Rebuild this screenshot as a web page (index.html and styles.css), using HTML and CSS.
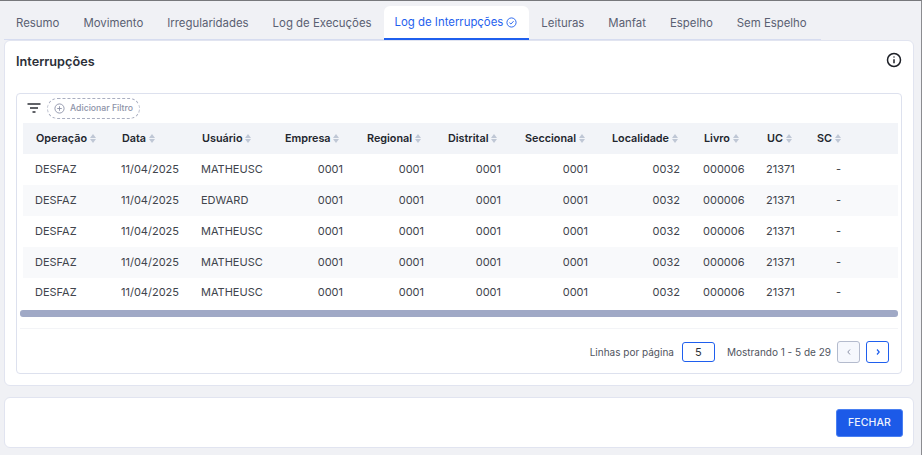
FILE: index.html
```html
<!DOCTYPE html>
<html lang="pt-BR">
<head>
    <meta charset="UTF-8">
    <meta name="viewport" content="width=device-width, initial-scale=1.0">
    <title>Interrupções</title>
    <link rel="stylesheet" href="styles.css">
</head>
<body>
    <div class="page">
        <div class="tabs">
            <a class="tab">Resumo</a>
            <a class="tab">Movimento</a>
            <a class="tab">Irregularidades</a>
            <a class="tab">Log de Execuções</a>
            <a class="tab active">Log de Interrupções
                <svg class="tab-check" width="11" height="11" viewBox="0 0 12 12" fill="none" stroke="#1f5fee" stroke-width="1"><circle cx="6" cy="6" r="5"/><path d="M3.8 6.2l1.6 1.5 2.9-3.2"/></svg>
            </a>
            <a class="tab">Leituras</a>
            <a class="tab">Manfat</a>
            <a class="tab">Espelho</a>
            <a class="tab">Sem Espelho</a>
        </div>

        <div class="card main-card">
            <div class="card-head">
                <h2>Interrupções</h2>
                <svg width="16" height="16" viewBox="0 0 16 16" fill="none" stroke="#1c1f26" stroke-width="1.5"><circle cx="8" cy="8" r="6.5"/><path d="M8 7.2v4"/><path d="M8 4.4v1.2"/></svg>
            </div>

            <div class="table-box">
                <div class="filter-row">
                    <svg width="14" height="12" viewBox="0 0 14 12" fill="none" stroke="#1c1f26" stroke-width="1.4"><path d="M0.5 2h13"/><path d="M3 6h8"/><path d="M5.5 10h3"/></svg>
                    <button class="add-filter">
                        <svg width="11" height="11" viewBox="0 0 12 12" fill="none" stroke="#8d93a8" stroke-width="1"><circle cx="6" cy="6" r="5"/><path d="M6 3.5v5"/><path d="M3.5 6h5"/></svg>
                        Adicionar Filtro
                    </button>
                </div>

                <table class="grid">
                    <thead>
                        <tr>
                            <th class="c-op">Operação <span class="sort"></span></th>
                            <th class="c-data">Data <span class="sort"></span></th>
                            <th class="c-user">Usuário <span class="sort"></span></th>
                            <th class="c-emp">Empresa <span class="sort"></span></th>
                            <th class="c-reg">Regional <span class="sort"></span></th>
                            <th class="c-dis">Distrital <span class="sort"></span></th>
                            <th class="c-sec">Seccional <span class="sort"></span></th>
                            <th class="c-loc">Localidade <span class="sort"></span></th>
                            <th class="c-liv">Livro <span class="sort"></span></th>
                            <th class="c-uc">UC <span class="sort"></span></th>
                            <th class="c-sc">SC <span class="sort"></span></th>
                        </tr>
                    </thead>
                    <tbody>
                        <tr>
                            <td>DESFAZ</td><td>11/04/2025</td><td>MATHEUSC</td>
                            <td class="num">0001</td><td class="num">0001</td><td class="num">0001</td><td class="num">0001</td><td class="num">0032</td>
                            <td>000006</td><td>21371</td><td class="dash">-</td>
                        </tr>
                        <tr class="odd">
                            <td>DESFAZ</td><td>11/04/2025</td><td>EDWARD</td>
                            <td class="num">0001</td><td class="num">0001</td><td class="num">0001</td><td class="num">0001</td><td class="num">0032</td>
                            <td>000006</td><td>21371</td><td class="dash">-</td>
                        </tr>
                        <tr>
                            <td>DESFAZ</td><td>11/04/2025</td><td>MATHEUSC</td>
                            <td class="num">0001</td><td class="num">0001</td><td class="num">0001</td><td class="num">0001</td><td class="num">0032</td>
                            <td>000006</td><td>21371</td><td class="dash">-</td>
                        </tr>
                        <tr class="odd">
                            <td>DESFAZ</td><td>11/04/2025</td><td>MATHEUSC</td>
                            <td class="num">0001</td><td class="num">0001</td><td class="num">0001</td><td class="num">0001</td><td class="num">0032</td>
                            <td>000006</td><td>21371</td><td class="dash">-</td>
                        </tr>
                        <tr>
                            <td>DESFAZ</td><td>11/04/2025</td><td>MATHEUSC</td>
                            <td class="num">0001</td><td class="num">0001</td><td class="num">0001</td><td class="num">0001</td><td class="num">0032</td>
                            <td>000006</td><td>21371</td><td class="dash">-</td>
                        </tr>
                    </tbody>
                </table>

                <div class="scrollbar"></div>

                <div class="pager">
                    <span>Linhas por página</span>
                    <div class="page-size">5</div>
                    <span class="showing">Mostrando 1 - 5 de 29</span>
                    <button class="page-btn prev">
                        <svg width="6" height="8" viewBox="0 0 6 8" fill="none" stroke="#8d93a8" stroke-width="1"><path d="M4 1.5L1.8 4 4 6.5"/></svg>
                    </button>
                    <button class="page-btn next">
                        <svg width="6" height="8" viewBox="0 0 6 8" fill="none" stroke="#1f5fee" stroke-width="1.2"><path d="M2 1.5L4.2 4 2 6.5"/></svg>
                    </button>
                </div>
            </div>
        </div>

        <div class="card footer-card">
            <button class="close-btn">FECHAR</button>
        </div>
    </div>
</body>
</html>
```

FILE: styles.css
```css
html, body {
    margin: 0;
    height: 100%;
}
body {
    background-color: #f0f1f5;
    font-family: "Inter", "Liberation Sans", sans-serif;
    color: #3d4149;
    overflow: hidden;
}
.page {
    height: 455px;
    box-sizing: border-box;
    border-top: 1px solid #77787c;
    border-right: 1px solid #8b8c90;
    padding: 5px 7px 0 4px;
}

/* tabs */
.tabs {
    display: flex;
    width: 817px;
    height: 33px;
    border-bottom: 1px solid #d6dcf0;
}
.tab {
    display: flex;
    align-items: center;
    gap: 3px;
    padding: 0 12px;
    font-size: 11.4px;
    color: #5a6072;
    white-space: nowrap;
}
.tab.active {
    background-color: #fff;
    color: #1f5fee;
    border-bottom: 2px solid #1f5fee;
    border-radius: 6px 6px 0 0;
    height: 32px;
    padding: 0 12px 0 11px;
    position: relative;
}
.tab-check {
    flex: none;
}

/* cards */
.card {
    background-color: #fff;
    border: 1px solid #e1e4f0;
    border-radius: 6px;
    box-sizing: border-box;
}
.main-card {
    height: 346px;
    padding: 0 11px;
}
.card-head {
    display: flex;
    justify-content: space-between;
    height: 52px;
    padding-top: 11px;
    box-sizing: border-box;
}
.card-head h2 {
    margin: 1px 0 0;
    font-size: 12.7px;
    font-weight: 600;
    line-height: 18px;
    color: #2b2f38;
}
.table-box {
    height: 281px;
    box-sizing: border-box;
    border: 1px solid #dde1ee;
    border-radius: 4px;
    padding: 0 3px;
}
.filter-row {
    display: flex;
    align-items: center;
    gap: 6px;
    height: 28px;
    padding-left: 7px;
}
.add-filter {
    display: flex;
    align-items: center;
    gap: 5px;
    height: 21px;
    padding: 0 6px;
    background: none;
    border: 1px dashed #a9aec0;
    border-radius: 11px;
    font-family: inherit;
    font-size: 8.7px;
    font-weight: 500;
    color: #8d93a8;
}

/* table */
.grid {
    border-collapse: collapse;
    table-layout: fixed;
    width: 875px;
    margin: 1px 0 0 3px;
    font-size: 11px;
}
.grid th {
    box-sizing: border-box;
    height: 31px;
    padding: 0 0 1px 13px;
    background-color: #f2f4f8;
    text-align: left;
    font-size: 10.8px;
    font-weight: 600;
    color: #22262e;
    white-space: nowrap;
}
.grid td {
    box-sizing: border-box;
    height: 31px;
    padding: 0 0 2px 12px;
    white-space: nowrap;
    color: #40444c;
}
.grid tr.odd td {
    background-color: #f8f9fb;
}
.grid td.num {
    text-align: right;
    padding: 0 11px 2px 0;
}
.grid td.dash {
    padding-left: 31px;
}
.grid tbody tr:last-child td {
    padding-bottom: 4px;
}
.c-op { width: 86px; }
.c-data { width: 80px; }
.c-user { width: 83px; }
.c-emp { width: 82px; }
.c-reg { width: 81px; }
.c-dis { width: 77px; }
.c-sec { width: 87px; }
.c-loc { width: 92px; }
.c-liv { width: 63px; }
.c-uc { width: 51px; }
.grid th.c-sc { padding-left: 12px; }
.sort {
    display: inline-block;
    vertical-align: middle;
    position: relative;
    width: 6px;
    height: 9px;
}
.sort::before, .sort::after {
    content: "";
    position: absolute;
    left: 0;
    border-left: 3px solid transparent;
    border-right: 3px solid transparent;
}
.sort::before {
    top: 0;
    border-bottom: 4px solid #bfc7d5;
}
.sort::after {
    bottom: 0;
    border-top: 4px solid #bfc7d5;
}
.scrollbar {
    height: 7px;
    margin-top: 1px;
    background-color: #a0a9c6;
    border-radius: 3px;
}

/* pagination */
.pager {
    display: flex;
    align-items: center;
    justify-content: flex-end;
    height: 45px;
    margin-top: 11px;
    padding-right: 9px;
    border-top: 1px solid #f3f4f7;
    font-size: 10px;
    color: #50545e;
}
.page-size {
    width: 33px;
    height: 20px;
    margin: 0 12px 0 8px;
    border: 1px solid #1f5fee;
    border-radius: 3px;
    box-sizing: border-box;
    text-align: center;
    line-height: 18px;
    font-size: 11px;
    color: #2b2f38;
}
.page-btn {
    display: flex;
    align-items: center;
    justify-content: center;
    width: 23px;
    height: 22px;
    padding: 0;
    border-radius: 3px;
    box-sizing: border-box;
}
.page-btn.prev {
    margin: 0 6px;
    background-color: #f6f8fd;
    border: 1px solid #b4bbcd;
}
.page-btn.next {
    background-color: #fff;
    border: 1px solid #1f5fee;
}

/* footer */
.footer-card {
    display: flex;
    align-items: center;
    justify-content: flex-end;
    height: 51px;
    margin-top: 11px;
    padding-right: 10px;
}
.close-btn {
    width: 67px;
    height: 28px;
    background-color: #1c5ae8;
    border: 1px solid #4a80f2;
    border-radius: 3px;
    font-family: inherit;
    font-size: 10.5px;
    font-weight: 500;
    letter-spacing: 0.1px;
    color: #eef2fd;
}
```
